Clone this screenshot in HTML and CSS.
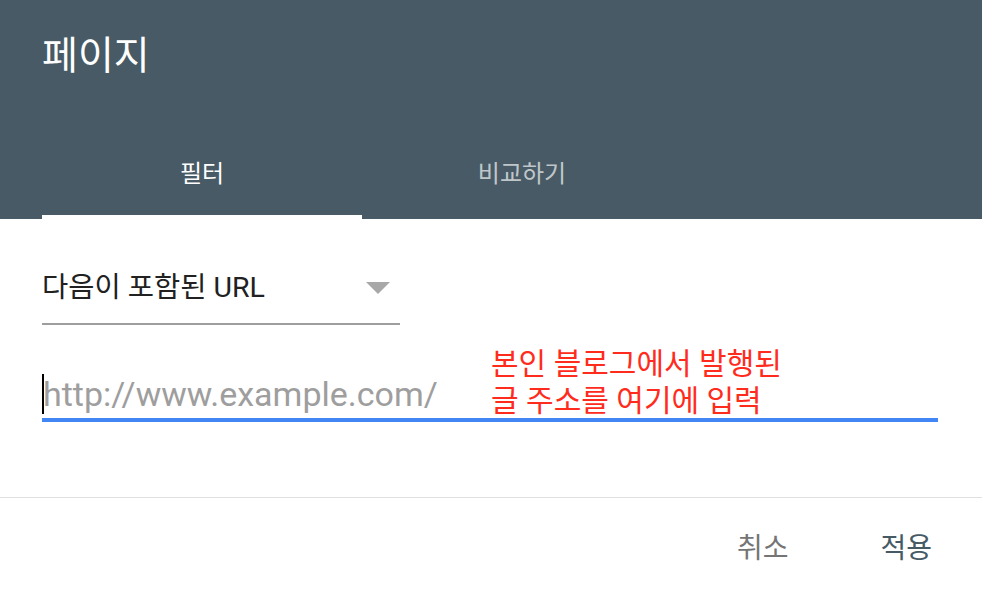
FILE: index.html
```html
<!DOCTYPE html>
<html lang="ko">
<head>
<meta charset="utf-8">
<title>페이지</title>
<link rel="stylesheet" href="styles.css">
</head>
<body>
<div class="dialog">
  <header class="header">
    <h1 class="title">페이지</h1>
    <nav class="tabs">
      <div class="tab active">필터</div>
      <div class="tab">비교하기</div>
    </nav>
  </header>
  <main class="content">
    <div class="select">
      <span class="select-label">다음이 포함된 URL</span>
      <svg class="select-arrow" width="24" height="12" viewBox="0 0 24 12"><path d="M0 0h24L12 12z" fill="#a8a8a8"/></svg>
    </div>
    <div class="field">
      <span class="caret"></span><span class="placeholder">http://www.example.com/</span>
      <div class="note">본인 블로그에서 발행된<br>글 주소를 여기에 입력</div>
    </div>
  </main>
  <footer class="actions">
    <button class="btn btn-cancel">취소</button>
    <button class="btn btn-apply">적용</button>
  </footer>
</div>
</body>
</html>
```

FILE: styles.css
```css
* { box-sizing: border-box; }
html, body { margin: 0; padding: 0; background: #fff; }
body {
  font-family: Roboto, "Noto Sans CJK KR", sans-serif;
  width: 982px;
  height: 596px;
  overflow: hidden;
}
.header {
  background: #475a65;
  padding: 0 42px;
  height: 219px;
}
.title {
  margin: 0;
  height: 123px;
  padding-top: 32px;
  font-size: 39px;
  line-height: 48px;
  font-weight: 400;
  color: #fff;
}
.tabs {
  display: flex;
}
.tab {
  width: 320px;
  height: 96px;
  padding-top: 4px;
  display: flex;
  align-items: center;
  justify-content: center;
  font-size: 24px;
  color: rgba(255,255,255,0.68);
  border-bottom: 4px solid transparent;
}
.tab.active {
  color: #fff;
  border-bottom-color: #fff;
}
.content {
  padding: 0 44px 0 42px;
}
.select {
  margin-top: 49px;
  width: 358px;
  display: flex;
  align-items: center;
  justify-content: space-between;
  padding: 0 10px 15px 0;
  border-bottom: 2px solid #9e9e9e;
}
.select-label {
  font-size: 28.5px;
  line-height: 40px;
  color: #212121;
}
.select-arrow { display: block; }
.field {
  position: relative;
  margin-top: 49px;
  display: flex;
  align-items: center;
  height: 48px;
  padding-bottom: 4px;
  border-bottom: 4px solid #4285f4;
}
.caret {
  width: 2px;
  height: 40px;
  background: #000;
  flex: none;
}
.placeholder {
  font-size: 34px;
  line-height: 40px;
  color: #9e9e9e;
  margin-left: -1px;
}
.note {
  position: absolute;
  left: 449px;
  top: -29px;
  font-size: 30px;
  line-height: 37px;
  color: #ff2b1c;
}
.actions {
  margin-top: 75px;
  border-top: 1px solid #e0e0e0;
  display: flex;
  justify-content: flex-end;
  gap: 92px;
  padding: 31px 50px 0 0;
}
.btn {
  border: 0;
  background: none;
  padding: 0;
  margin: 0;
  font-family: Roboto, "Noto Sans CJK KR", sans-serif;
  font-size: 28px;
  line-height: 40px;
}
.btn-cancel { color: #757575; }
.btn-apply { color: #465a65; }
```
